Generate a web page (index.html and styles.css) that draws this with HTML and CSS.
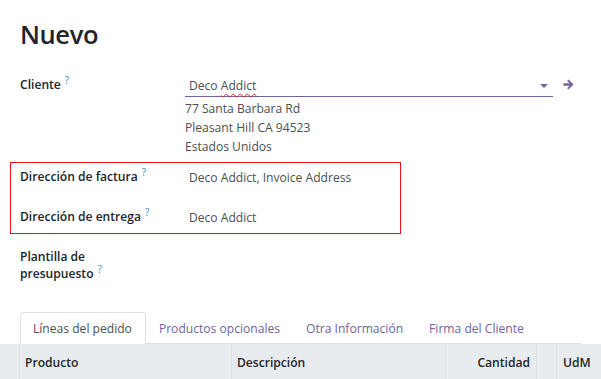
FILE: index.html
```html
<!DOCTYPE html>
<html lang="es">
<head>
<meta charset="utf-8">
<title>Nuevo</title>
<link rel="stylesheet" href="styles.css">
</head>
<body>
<div class="sheet">
  <h1 class="title">Nuevo</h1>

  <div class="row row-cliente">
    <div class="label">Cliente<sup>?</sup></div>
    <div class="value">
      <div class="field-line">
        <div class="input">
          <span class="input-text">Deco <span class="misspelled">Addict</span></span>
          <span class="caret"></span>
        </div>
        <svg class="goto" width="11" height="11" viewBox="0 0 12 12" aria-hidden="true">
          <path d="M0.5 4.6h6.6L4.5 2 6 0.5 11.5 6 6 11.5 4.5 10l2.6-2.6H0.5z" fill="#71639e"/>
        </svg>
      </div>
      <div class="address">
        <div>77 Santa Barbara Rd</div>
        <div>Pleasant Hill CA 94523</div>
        <div>Estados Unidos</div>
      </div>
    </div>
  </div>

  <div class="highlight">
    <div class="row row-plain">
      <div class="label">Dirección de factura<sup>?</sup></div>
      <div class="value plain">Deco Addict, Invoice Address</div>
    </div>
    <div class="row row-plain">
      <div class="label">Dirección de entrega<sup>?</sup></div>
      <div class="value plain">Deco Addict</div>
    </div>
  </div>

  <div class="row row-template">
    <div class="label narrow">Plantilla de presupuesto<sup>?</sup></div>
    <div class="value"></div>
  </div>

  <ul class="tabs">
    <li class="tab active">Líneas del pedido</li>
    <li class="tab">Productos opcionales</li>
    <li class="tab">Otra Información</li>
    <li class="tab">Firma del Cliente</li>
  </ul>
</div>

<div class="table-head">
  <div class="col col-handle"></div>
  <div class="col col-product">Producto</div>
  <div class="col col-desc">Descripción</div>
  <div class="col col-qty">Cantidad</div>
  <div class="col col-blank"></div>
  <div class="col col-uom">UdM</div>
</div>
</body>
</html>
```

FILE: styles.css
```css
* { box-sizing: border-box; }

html, body {
  margin: 0;
  padding: 0;
  background: #ffffff;
}

body {
  font-family: "Open Sans", "Noto Sans", sans-serif;
  font-size: 12.1px;
  color: #212529;
  overflow: hidden;
}

.sheet {
  padding: 0 20px;
}

.title {
  margin: 17px 0 0;
  font-size: 25.5px;
  line-height: 34px;
  font-weight: 600;
  letter-spacing: -0.4px;
  color: #212529;
}

.row {
  display: flex;
}

.label {
  width: 165px;
  flex: none;
  font-weight: 600;
  line-height: 18px;
  color: #212529;
}

.label sup {
  font-size: 10px;
  font-weight: 400;
  color: #2f8bd6;
  margin-left: 4px;
  vertical-align: 5px;
  line-height: 0;
}

.label.narrow {
  width: 100px;
  line-height: 17px;
}

.value {
  flex: none;
  width: 368px;
  color: #4b4f54;
}

.row-cliente {
  margin-top: 24px;
}

.row-cliente .label {
  padding-top: 1px;
}

.field-line {
  display: flex;
  align-items: center;
  width: 400px;
}

.input {
  flex: none;
  width: 368px;
  height: 22px;
  border-bottom: 1px solid #71639e;
  display: flex;
  align-items: center;
  padding: 1px 5px 0 4px;
}

.input-text {
  flex: 1;
  color: #4b4f54;
  line-height: 20px;
}

.misspelled {
  text-decoration: underline wavy #e8262a;
  text-decoration-thickness: 1px;
  text-underline-offset: 3px;
}

.caret {
  width: 0;
  height: 0;
  border-left: 4px solid transparent;
  border-right: 4px solid transparent;
  border-top: 4px solid #71639e;
}

.goto {
  flex: none;
  margin-left: 10px;
  margin-top: -3px;
}

.address {
  padding-top: 2px;
  line-height: 19px;
}

.highlight {
  margin: 6px 0 0 -10px;
  width: 391px;
  height: 72px;
  border: 1px solid #e8141b;
  padding: 5px 0 0 9px;
}

.row-plain + .row-plain {
  margin-top: 21px;
}

.value.plain {
  padding-left: 4px;
  padding-top: 1px;
  line-height: 18px;
}

.row-template {
  margin-top: 14px;
}

.tabs {
  list-style: none;
  margin: 30px 0 0;
  padding: 0;
  display: flex;
  border-bottom: 1px solid #dee2e6;
  height: 32px;
}

.tab {
  padding: 0 12px;
  height: 32px;
  line-height: 32px;
  color: #71639e;
  border: 1px solid transparent;
  border-bottom: none;
}

.tab.active {
  color: #495057;
  background: #ffffff;
  border-color: #dee2e6;
  border-radius: 4px 4px 0 0;
  padding: 0 13px 0 12px;
}

.table-head {
  display: flex;
  height: 40px;
  background: #e9ecef;
  font-weight: 600;
  color: #212529;
}

.col {
  border-right: 1px solid #dee2e6;
  line-height: 38px;
  padding: 0 5px;
  flex: none;
}

.col-handle { width: 20px; }
.col-product { width: 212px; }
.col-desc { width: 214px; }
.col-qty { width: 91px; text-align: right; padding-right: 6px; }
.col-blank { width: 20px; }
.col-uom { flex: 1; border-right: none; padding-left: 6px; }
```
